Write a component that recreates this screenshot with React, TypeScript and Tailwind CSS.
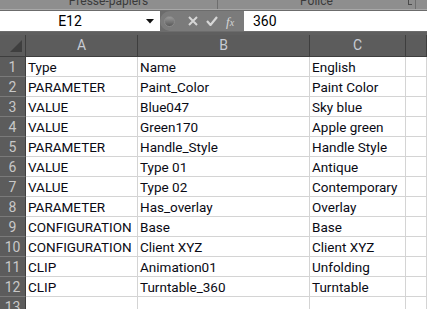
import React from "react";

const rows: [string, string, string][] = [
  ["Type", "Name", "English"],
  ["PARAMETER", "Paint_Color", "Paint Color"],
  ["VALUE", "Blue047", "Sky blue"],
  ["VALUE", "Green170", "Apple green"],
  ["PARAMETER", "Handle_Style", "Handle Style"],
  ["VALUE", "Type 01", "Antique"],
  ["VALUE", "Type 02", "Contemporary"],
  ["PARAMETER", "Has_overlay", "Overlay"],
  ["CONFIGURATION", "Base", "Base"],
  ["CONFIGURATION", "Client XYZ", "Client XYZ"],
  ["CLIP", "Animation01", "Unfolding"],
  ["CLIP", "Turntable_360", "Turntable"],
  ["", "", ""],
];

const cols = "grid grid-cols-[26px_112px_172px_96px_1fr]";

function Cell({ children }: { children?: React.ReactNode }) {
  return (
    <div className="h-[20px] bg-white border-r border-b border-[#d4d4d4] pl-[2px] flex items-end pb-[2px] text-[13.5px] leading-none text-[#0a0a14] whitespace-nowrap">
      {children}
    </div>
  );
}

const App = () => {
  return (
    <div className="w-[427px] h-[309px] overflow-hidden bg-[#5c5c5c] font-['Roboto',sans-serif]">
      {/* Ribbon group labels (cut off at top) */}
      <div className="h-[10px] bg-[#8e8e8e] border-b border-[#a8a8a8] flex overflow-hidden text-[12px] text-[#3a3a3a]">
        <div className="w-[218px] border-r border-[#6e6e6e] flex justify-center">
          <span className="-mt-[5px] leading-none">Presse-papiers</span>
        </div>
        <div className="w-[198px] border-r border-[#6e6e6e] flex justify-center relative">
          <span className="-mt-[5px] leading-none">Police</span>
          <span className="absolute right-[3px] top-0 w-[4px] h-[5px] border-l border-b border-[#4a4a4a]" />
        </div>
      </div>

      {/* Formula bar */}
      <div className="h-[25px] bg-[#6c6c6c] flex pt-[1px] border-b-[3px] border-[#5f5f5f]">
        <div className="w-[160px] h-[20px] bg-white flex items-center relative">
          <span className="w-full text-center text-[14px] text-black pr-[20px]">E12</span>
          <svg className="absolute left-[146px] top-[8px]" width="8" height="5" viewBox="0 0 8 5">
            <path d="M0 0h8L4 4.5z" fill="#111" />
          </svg>
        </div>
        <div className="w-[84px] h-[20px] flex items-center relative">
          <div className="absolute inset-0 bg-[#7b7b7b] rounded-l-full" />
          <div className="relative ml-[4px] w-[11px] h-[11px] rounded-full bg-gradient-to-b from-[#9a9a9a] to-[#5a5a5a] border border-[#8a8a8a]" />
          <svg className="relative ml-[13px]" width="10" height="10" viewBox="0 0 10 10">
            <path d="M1 1l8 8M9 1l-8 8" stroke="#d6d6d6" strokeWidth="2" />
          </svg>
          <svg className="relative ml-[8px]" width="12" height="10" viewBox="0 0 12 10">
            <path d="M1 5l3.5 4L11 1" stroke="#d6d6d6" strokeWidth="2.2" fill="none" />
          </svg>
          <span className="relative ml-[8px] text-[13px] italic font-['Liberation_Serif',serif] text-[#d6d6d6] leading-none">
            f<span className="text-[10px]">x</span>
          </span>
        </div>
        <div className="flex-1 h-[20px] bg-white flex items-center pl-[9px] text-[14px] text-black">
          360
        </div>
      </div>

      {/* Column headers */}
      <div className={`${cols} h-[22px] text-[14px] text-[#c8ccd4]`}>
        <div className="border-r border-b border-[#3e3e3e] relative">
          <svg className="absolute right-[3px] bottom-[4px]" width="12" height="12" viewBox="0 0 12 12">
            <path d="M12 0V12H0z" fill="#3f3f3f" />
          </svg>
        </div>
        {["A", "B", "C", ""].map((c, i) => (
          <div
            key={i}
            className="border-r border-b border-[#3e3e3e] flex items-center justify-center"
          >
            {c}
          </div>
        ))}
      </div>

      {/* Rows */}
      {rows.map((r, i) => (
        <div key={i} className={cols}>
          <div className="h-[20px] bg-[#5c5c5c] border-r border-[#3e3e3e] border-b border-b-[#7a7a7a] flex items-center justify-center text-[14px] text-[#c8c8c8] leading-none">
            {i + 1}
          </div>
          <Cell>{r[0]}</Cell>
          <Cell>{r[1]}</Cell>
          <Cell>{r[2]}</Cell>
          <Cell />
        </div>
      ))}
    </div>
  );
};

export default App;
